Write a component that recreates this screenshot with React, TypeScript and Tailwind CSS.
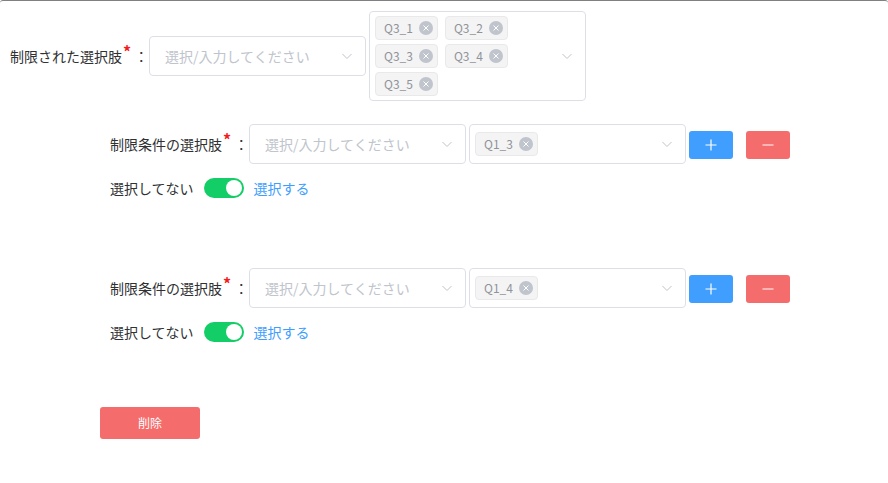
import React from "react";

const font = { fontFamily: '"Noto Sans CJK JP", "Noto Sans", sans-serif' };

function Chevron() {
  return (
    <svg width="12" height="12" viewBox="0 0 12 12" className="shrink-0">
      <path d="M1.5 4 L6 8.5 L10.5 4" fill="none" stroke="#c0c4cc" strokeWidth="1" />
    </svg>
  );
}

function Tag({ label }: { label: string }) {
  return (
    <span className="inline-flex h-[24px] items-center gap-[6px] rounded-[4px] border border-[#e9e9eb] bg-[#f4f4f5] pl-[8px] pr-[4px] text-[12px] text-[#909399]">
      <span>{label}</span>
      <span className="flex h-[14px] w-[14px] items-center justify-center rounded-full bg-[#c0c4cc]">
        <svg width="8" height="8" viewBox="0 0 8 8">
          <path d="M1.5 1.5 L6.5 6.5 M6.5 1.5 L1.5 6.5" stroke="#ffffff" strokeWidth="1" />
        </svg>
      </span>
    </span>
  );
}

function Select() {
  return (
    <div className="flex h-[40px] w-[217px] shrink-0 items-center justify-between rounded-[4px] border border-[#dcdfe6] bg-white pl-[15px] pr-[12px]">
      <span className="text-[14px] text-[#c0c4cc]">選択/入力してください</span>
      <Chevron />
    </div>
  );
}

function Label({ text }: { text: string }) {
  return (
    <div className="flex w-[139px] shrink-0 items-center text-[14px] text-[#303133]">
      <span>{text}</span>
      <span className="relative -top-[5px] ml-[1px] text-[16px] font-bold leading-none text-[#f51c1c]">*</span>
      <span className="ml-[3px]">：</span>
    </div>
  );
}

function Condition({ tag }: { tag: string }) {
  return (
    <div className="flex flex-col">
      <div className="flex items-center">
        <Label text="制限条件の選択肢" />
        <Select />
        <div className="ml-[3px] flex h-[40px] w-[217px] shrink-0 items-center justify-between rounded-[4px] border border-[#dcdfe6] bg-white pl-[5px] pr-[12px]">
          <Tag label={tag} />
          <Chevron />
        </div>
        <button className="ml-[3px] mt-[2px] flex h-[28px] w-[44px] items-center justify-center rounded-[3px] bg-[#409eff]">
          <svg width="12" height="12" viewBox="0 0 12 12">
            <path d="M6 0.5 V11.5 M0.5 6 H11.5" stroke="#ffffff" strokeWidth="1.2" />
          </svg>
        </button>
        <button className="ml-[13px] mt-[2px] flex h-[28px] w-[44px] items-center justify-center rounded-[3px] bg-[#f56c6c]">
          <svg width="12" height="12" viewBox="0 0 12 12">
            <path d="M0.5 6 H11.5" stroke="#ffffff" strokeWidth="1.2" />
          </svg>
        </button>
      </div>
      <div className="mt-[14px] flex h-[20px] items-center text-[14px]">
        <span className="text-[#303133]">選択してない</span>
        <span className="ml-[10px] flex h-[20px] w-[40px] items-center justify-end rounded-full bg-[#13ce66] pr-[2px]">
          <span className="h-[16px] w-[16px] rounded-full bg-white" />
        </span>
        <span className="ml-[10px] text-[#409eff]">選択する</span>
      </div>
    </div>
  );
}

export default function App() {
  return (
    <div style={font} className="h-[483px] w-[888px] overflow-hidden rounded-[3px] border-t border-[#808080] bg-white">
      <div className="flex items-center pl-[10px] pt-[10px]">
        <Label text="制限された選択肢" />
        <Select />
        <div className="ml-[3px] flex h-[90px] w-[217px] shrink-0 items-center justify-between rounded-[4px] border border-[#dcdfe6] bg-white pl-[5px] pr-[12px]">
          <div className="flex w-[140px] flex-wrap gap-x-[7px] gap-y-[4px]">
            <Tag label="Q3_1" />
            <Tag label="Q3_2" />
            <Tag label="Q3_3" />
            <Tag label="Q3_4" />
            <Tag label="Q3_5" />
          </div>
          <Chevron />
        </div>
      </div>
      <div className="mt-[23px] pl-[110px]">
        <Condition tag="Q1_3" />
      </div>
      <div className="mt-[70px] pl-[110px]">
        <Condition tag="Q1_4" />
      </div>
      <div className="mt-[65px] pl-[100px]">
        <button className="flex h-[32px] w-[100px] items-center justify-center rounded-[3px] bg-[#f56c6c] text-[12px] text-white">
          削除
        </button>
      </div>
    </div>
  );
}
